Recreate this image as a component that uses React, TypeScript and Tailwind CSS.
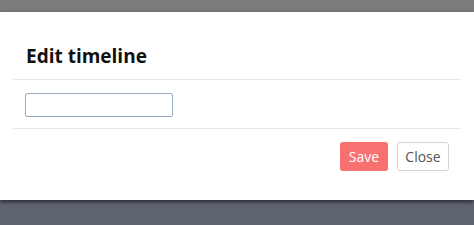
export default function App() {
  return (
    <div className="w-[474px] h-[225px] bg-[#5f6471] overflow-hidden" style={{ fontFamily: '"Open Sans", sans-serif' }}>
      <div className="h-[12px] bg-[#7b7b7b]" />
      <div className="h-[188px] bg-white shadow-[0_2px_4px_rgba(0,0,0,0.6)] relative">
        <div className="mx-[13px] h-[68px] border-b border-[#e6e6e6] flex items-center px-[13px] pt-[21px]">
          <h4 className="text-[19px] font-bold text-[#111]">Edit timeline</h4>
        </div>
        <div className="mx-[13px] h-[49px] border-b border-[#e6e6e6] pt-[13px] px-[12px]">
          <input
            type="text"
            className="w-[148px] h-[24px] border-[1.5px] border-[#9aaac4] rounded-[2px] outline-none"
          />
        </div>
        <div className="mx-[13px] flex justify-end gap-[9px] pt-[13px] pr-[12px]">
          <button className="h-[29px] w-[48px] rounded-[3px] bg-[#f87070] text-white text-[14px]">Save</button>
          <button className="h-[29px] w-[52px] rounded-[3px] bg-white border border-[#d4d4d4] text-[#555] text-[14px]">Close</button>
        </div>
      </div>
    </div>
  );
}
